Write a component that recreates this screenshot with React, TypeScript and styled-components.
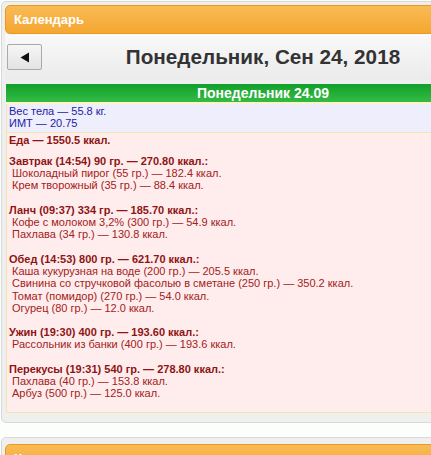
import styled, { createGlobalStyle } from "styled-components";

const Global = createGlobalStyle`
    html, body {
        margin: 0;
        padding: 0;
        overflow: hidden;
        background: #fbfefb;
    }
    body {
        font-family: "Liberation Sans", Arial, sans-serif;
    }
`;

const Page = styled.div`
    width: 524px;
    padding: 1px 0 0 1px;
`;

const Panel = styled.div<{ $gap?: number; $top?: number }>`
    border: 1px solid #d9d9d9;
    border-radius: 5px;
    background: #efefef;
    padding: ${({ $top }) => $top ?? 3}px 3px 9px 3px;
    margin-top: ${({ $gap }) => $gap ?? 0}px;
`;

const PanelHeader = styled.div`
    height: 27px;
    border: 1px solid #e99a1c;
    border-radius: 5px;
    background: linear-gradient(#f9bb55, #f5a631);
    color: #fff;
    font-weight: bold;
    font-size: 13px;
    line-height: 27px;
    padding-left: 8px;
`;

const Toolbar = styled.div`
    display: flex;
    align-items: center;
    height: 46px;
    padding: 0 2px;
    background: linear-gradient(#f9f9f9, #ebebeb);
`;

const NavButton = styled.button`
    width: 35px;
    height: 26px;
    border: 1px solid #a9a9a9;
    border-radius: 2px;
    background: linear-gradient(#f6f6f6, #e3e3e3);
    display: flex;
    align-items: center;
    justify-content: center;
    padding: 0;
    svg {
        display: block;
    }
`;

const Title = styled.div`
    flex: 1;
    text-align: center;
    font-size: 20.7px;
    font-weight: bold;
    color: #333;
    padding-right: 35px;
`;

const Day = styled.div`
    margin: 4px 1px 0 1px;
`;

const DayBar = styled.div`
    height: 18px;
    background: linear-gradient(#12a02a, #33bb45);
    color: #fff;
    font-weight: bold;
    font-size: 14px;
    line-height: 18px;
    text-align: center;
    border-bottom: 2px solid #fdf6c4;
`;

const Block = styled.div<{ $bg: string; $color: string }>`
    background: ${({ $bg }) => $bg};
    color: ${({ $color }) => $color};
    border: 1px solid #f1e6ad;
    border-top: none;
    font-size: 11px;
    line-height: 12.3px;
    padding: 1px 2px 2px 2px;
`;

const Total = styled.div`
    font-weight: bold;
    margin-bottom: 9px;
`;

const Meal = styled.div`
    margin-bottom: 12px;
    &:last-child {
        margin-bottom: 10px;
    }
`;

const MealHead = styled.div`
    font-weight: bold;
`;

const Item = styled.div`
    padding-left: 3px;
    color: #a32121;
`;

const meals = [
    {
        head: "Завтрак (14:54) 90 гр. — 270.80 ккал.:",
        items: ["Шоколадный пирог (55 гр.) — 182.4 ккал.", "Крем творожный (35 гр.) — 88.4 ккал."],
    },
    {
        head: "Ланч (09:37) 334 гр. — 185.70 ккал.:",
        items: ["Кофе с молоком 3,2% (300 гр.) — 54.9 ккал.", "Пахлава (34 гр.) — 130.8 ккал."],
    },
    {
        head: "Обед (14:53) 800 гр. — 621.70 ккал.:",
        items: [
            "Каша кукурузная на воде (200 гр.) — 205.5 ккал.",
            "Свинина со стручковой фасолью в сметане (250 гр.) — 350.2 ккал.",
            "Томат (помидор) (270 гр.) — 54.0 ккал.",
            "Огурец (80 гр.) — 12.0 ккал.",
        ],
    },
    {
        head: "Ужин (19:30) 400 гр. — 193.60 ккал.:",
        items: ["Рассольник из банки (400 гр.) — 193.6 ккал."],
    },
    {
        head: "Перекусы (19:31) 540 гр. — 278.80 ккал.:",
        items: ["Пахлава (40 гр.) — 153.8 ккал.", "Арбуз (500 гр.) — 125.0 ккал."],
    },
];

export default function App() {
    return (
        <Page>
            <Global />
            <Panel>
                <PanelHeader>Календарь</PanelHeader>
                <Toolbar>
                    <NavButton aria-label="prev">
                        <svg width="10" height="11" viewBox="0 0 10 11">
                            <path d="M9 0.5 L9 10.5 L0.5 5.5 Z" fill="#111" />
                        </svg>
                    </NavButton>
                    <Title>Понедельник, Сен 24, 2018</Title>
                </Toolbar>
                <Day>
                    <DayBar>Понедельник 24.09</DayBar>
                    <Block $bg="#eeeefd" $color="#1c1ca6">
                        <div>Вес тела — 55.8 кг.</div>
                        <div>ИМТ — 20.75</div>
                    </Block>
                    <Block $bg="#ffeded" $color="#8e1414">
                        <Total>Еда — 1550.5 ккал.</Total>
                        {meals.map((m) => (
                            <Meal key={m.head}>
                                <MealHead>{m.head}</MealHead>
                                {m.items.map((it) => (
                                    <Item key={it}>{it}</Item>
                                ))}
                            </Meal>
                        ))}
                    </Block>
                </Day>
            </Panel>
            <Panel $gap={14} $top={6}>
                <PanelHeader>Кнопки</PanelHeader>
            </Panel>
        </Page>
    );
}
